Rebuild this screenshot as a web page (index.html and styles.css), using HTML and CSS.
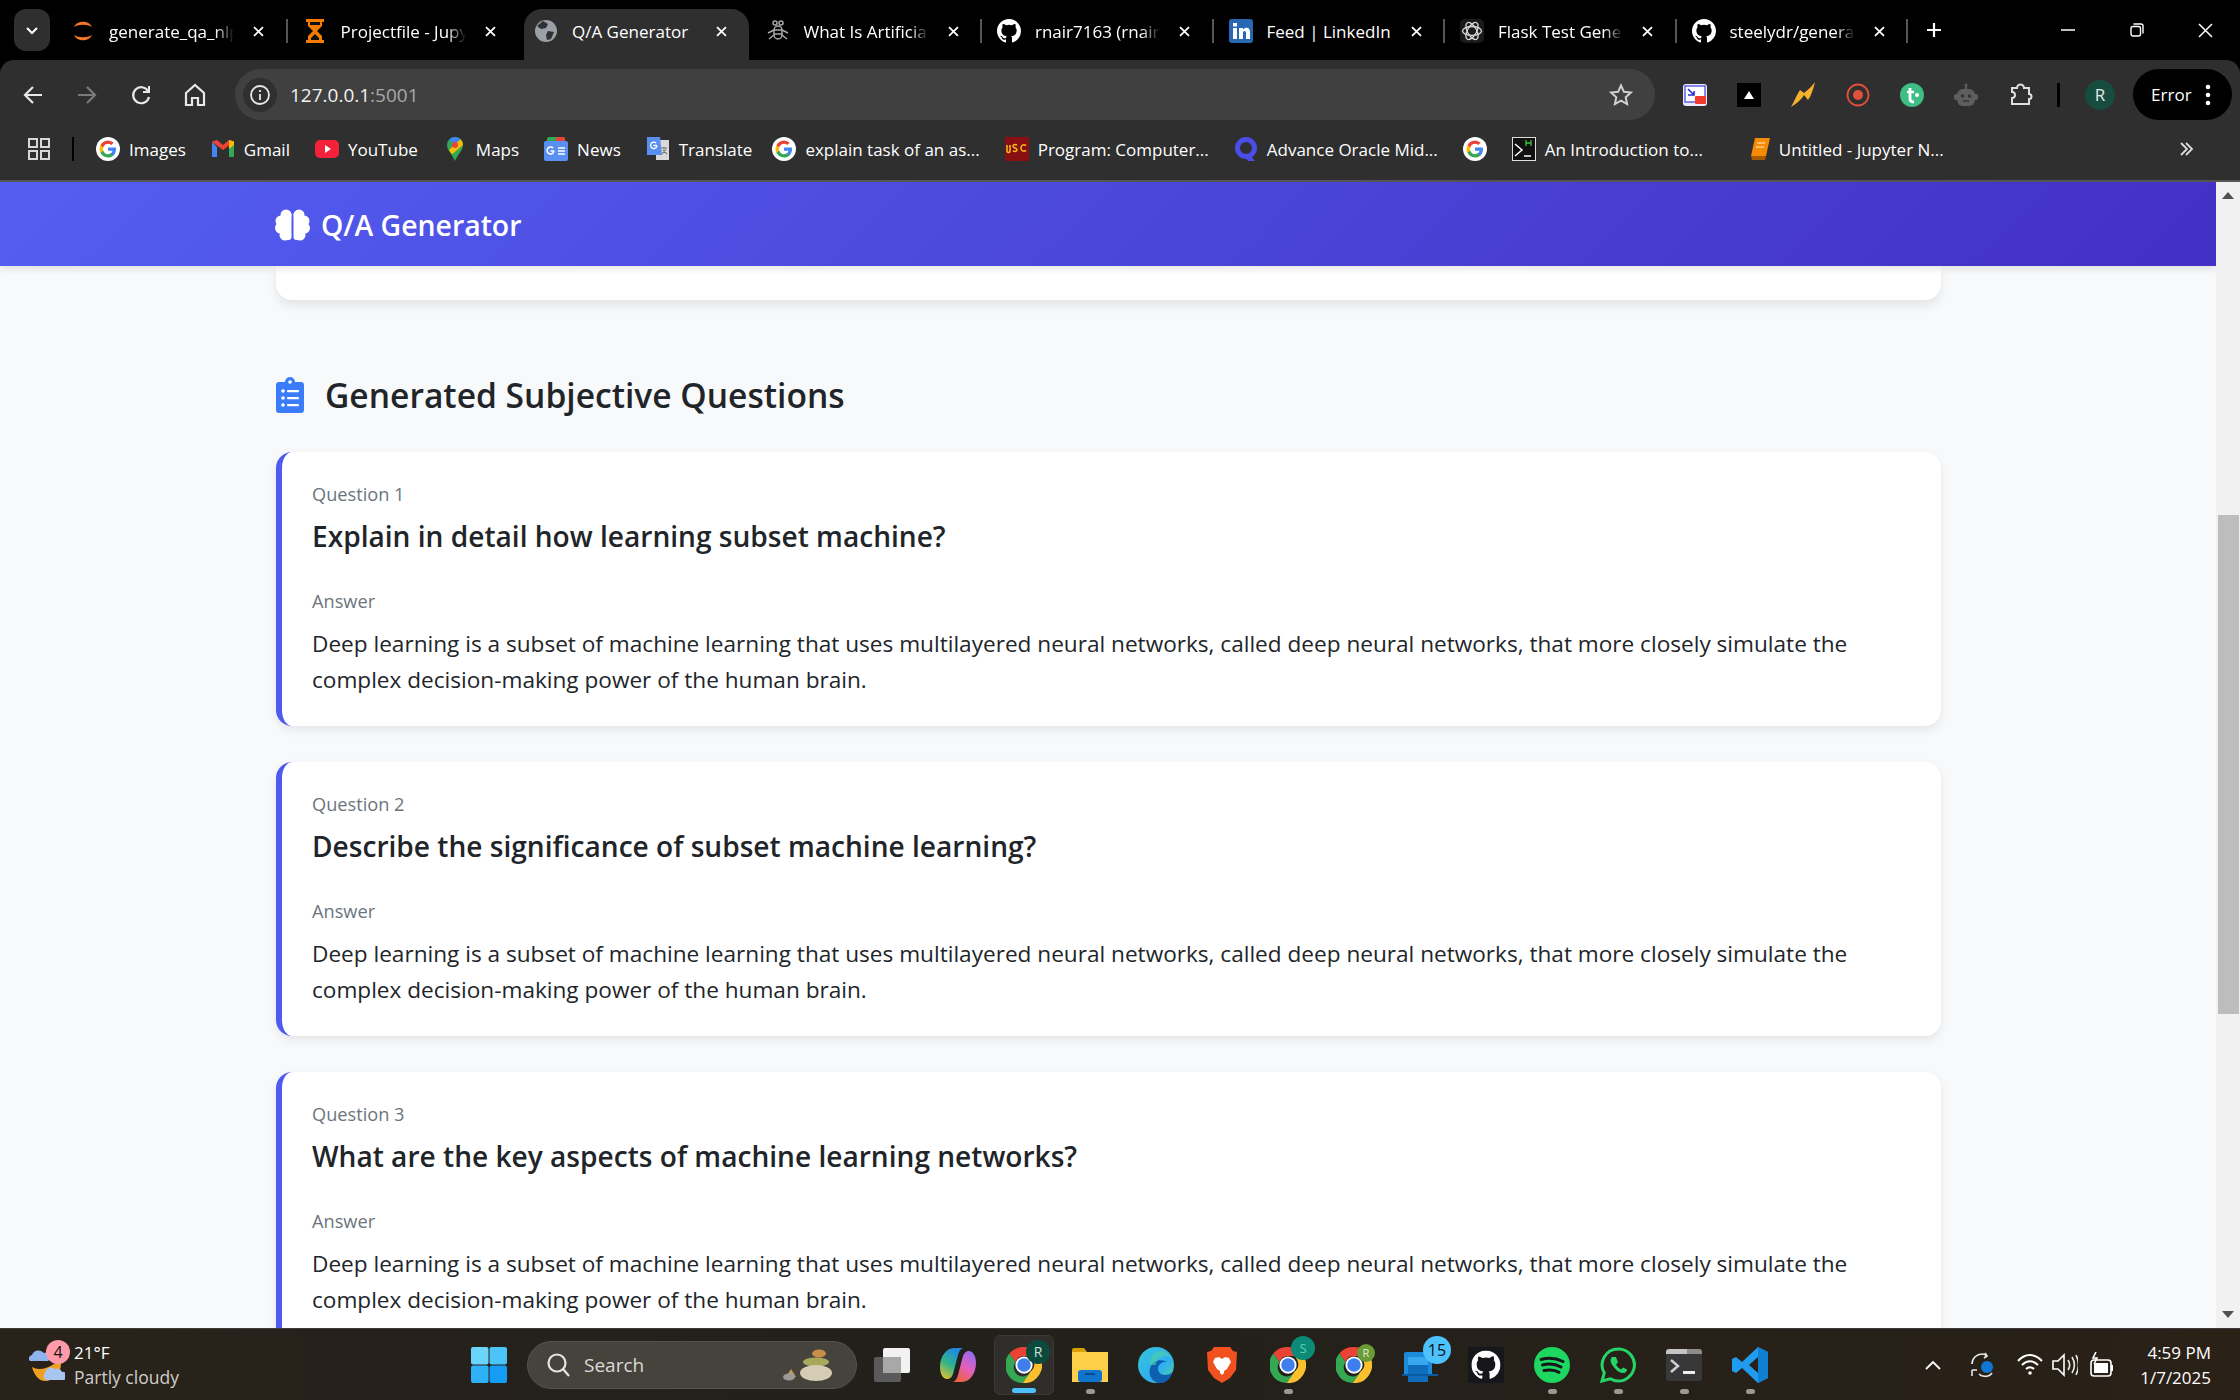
FILE: index.html
```html
<!DOCTYPE html>
<html lang="en">
<head>
    <meta charset="UTF-8">
    <meta name="viewport" content="width=device-width, initial-scale=1.0">
    <title>Q/A Generator</title>
    <link rel="stylesheet" href="styles.css">
</head>
<body>
    <svg class="defs" width="0" height="0">
        <symbol id="close" viewBox="0 0 16 16"><path d="M2.500 2.500l11 11M13.500 2.500l-11 11" stroke="#fff" stroke-width="2.200" fill="none"/></symbol>
        <symbol id="gicon" viewBox="0 0 48 48">
            <circle cx="24" cy="24" r="24" fill="#fff"/>
            <path d="M40 24.500c0-1.200-.1-2.300-.3-3.400H24v6.500h9a7.700 7.700 0 0 1-3.300 5v4.200h5.400c3.100-2.900 4.900-7.100 4.900-12.300z" fill="#4285f4"/>
            <path d="M24 41c4.500 0 8.300-1.500 11.100-4.100l-5.400-4.200c-1.500 1-3.400 1.600-5.700 1.600-4.400 0-8.100-3-9.400-6.900H9v4.300A17 17 0 0 0 24 41z" fill="#34a853"/>
            <path d="M14.600 27.400a10 10 0 0 1 0-6.800v-4.300H9a17 17 0 0 0 0 15.400z" fill="#fbbc05"/>
            <path d="M24 13.700c2.500 0 4.700.9 6.500 2.500l4.800-4.800A17 17 0 0 0 9 16.300l5.600 4.300c1.300-3.900 5-6.900 9.400-6.900z" fill="#ea4335"/>
        </symbol>
        <symbol id="github" viewBox="0 0 16 16"><path fill="#fff" d="M8 0C3.580 0 0 3.580 0 8c0 3.540 2.290 6.530 5.470 7.590.4.070.55-.17.55-.38 0-.19-.01-.82-.01-1.490-2.010.37-2.530-.49-2.690-.94-.09-.23-.48-.94-.82-1.130-.28-.15-.68-.52-.01-.53.630-.01 1.080.58 1.230.82.720 1.210 1.870.87 2.330.66.070-.52.280-.87.510-1.070-1.780-.2-3.640-.89-3.640-3.950 0-.87.310-1.590.820-2.150-.08-.2-.36-1.020.08-2.120 0 0 .67-.21 2.200.82a7.500 7.500 0 0 1 4 0c1.530-1.040 2.200-.82 2.200-.82.440 1.100.16 1.920.08 2.120.51.560.82 1.270.82 2.150 0 3.070-1.870 3.750-3.650 3.950.29.250.54.730.54 1.480 0 1.070-.01 1.930-.01 2.200 0 .21.150.46.550.38A8.010 8.010 0 0 0 16 8c0-4.420-3.580-8-8-8z"/></symbol>
        <symbol id="chrome" viewBox="0 0 48 48">
            <path d="M24 0a24 24 0 0 1 20.800 12H24a12 12 0 0 0-11.300 8L4.400 8.800A24 24 0 0 1 24 0z" fill="#ea4335"/>
            <path d="M44.800 12A24 24 0 0 1 22 48l10.800-15.500A12 12 0 0 0 34 14z" fill="#fbc02d"/>
            <path d="M4.400 8.800A24 24 0 0 0 22 48l10-13.500A12 12 0 0 1 12.700 20z" fill="#34a853"/>
            <circle cx="24" cy="24" r="11.500" fill="#fff"/>
            <circle cx="24" cy="24" r="9" fill="#3f7fed"/>
        </symbol>
    </svg>

    <div class="tabstrip">
        <div class="tab-search"><svg width="14" height="9" viewBox="0 0 14 9"><path d="M2 2l5 5 5-5" stroke="#fff" stroke-width="2" fill="none"/></svg></div>
        <div class="tabs">
            <div class="tab">
                <svg class="favicon" viewBox="0 0 24 24"><path d="M3 8c3-7 15-7 18 0-5-3-13-3-18 0zM3 16c3 7 15 7 18 0-5 3-13 3-18 0z" fill="#f37726"/></svg>
                <span class="tab-title">generate_qa_nlp</span>
                <svg class="tab-close"><use href="#close"/></svg>
            </div>
            <div class="tab no-sep">
                <svg class="favicon" viewBox="0 0 24 24"><path d="M3 0h18v3h-2v4l-5 5 5 5v4h2v3H3v-3h2v-4l5-5-5-5V3H3z" fill="#f57c00"/><path d="M7 3h10v3H7zM12 15l-4 4v2h8v-2z" fill="#111"/></svg>
                <span class="tab-title">Projectfile - Jupy</span>
                <svg class="tab-close"><use href="#close"/></svg>
            </div>
            <div class="tab active">
                <svg class="favicon" viewBox="0 0 24 24"><circle cx="12" cy="12" r="11" fill="#9aa0a6"/><path d="M9 2l5 3-2 4-5 1-4-3zM14 12l6 1-3 7-4 1-1-5z" fill="#303134"/></svg>
                <span class="tab-title full">Q/A Generator</span>
                <svg class="tab-close"><use href="#close"/></svg>
            </div>
            <div class="tab">
                <svg class="favicon" viewBox="0 0 24 24" fill="none" stroke="#a8a8a8" stroke-width="1.500"><circle cx="9" cy="4" r="2"/><circle cx="15" cy="4" r="2"/><rect x="8" y="7" width="8" height="13" rx="4"/><path d="M8 11h8M8 15h8M8 11l-6 3M16 11l6 3M8 16l-5 4M16 16l5 4"/></svg>
                <span class="tab-title">What Is Artificia</span>
                <svg class="tab-close"><use href="#close"/></svg>
            </div>
            <div class="tab">
                <svg class="favicon"><use href="#github"/></svg>
                <span class="tab-title">rnair7163 (rnair</span>
                <svg class="tab-close"><use href="#close"/></svg>
            </div>
            <div class="tab">
                <svg class="favicon" viewBox="0 0 24 24"><rect width="24" height="24" rx="3" fill="#2867b2"/><path d="M4 9h4v11H4zM4 4h4v3.500H4zM10 9h4v1.500c1-1.200 2.200-1.800 3.500-1.800 2.500 0 3.500 1.800 3.500 4.500V20h-4v-6c0-1.300-.5-2-1.500-2s-1.500.7-1.500 2v6h-4z" fill="#fff"/></svg>
                <span class="tab-title full">Feed | LinkedIn</span>
                <svg class="tab-close"><use href="#close"/></svg>
            </div>
            <div class="tab">
                <svg class="favicon" viewBox="0 0 24 24" fill="none" stroke="#d8d8d8" stroke-width="1.300"><rect width="24" height="24" rx="5" fill="#1a1a1a" stroke="none"/><ellipse cx="12" cy="12" rx="9.500" ry="4.500"/><ellipse cx="12" cy="12" rx="9.500" ry="4.500" transform="rotate(60 12 12)"/><ellipse cx="12" cy="12" rx="9.500" ry="4.500" transform="rotate(120 12 12)"/></svg>
                <span class="tab-title">Flask Test Gener</span>
                <svg class="tab-close"><use href="#close"/></svg>
            </div>
            <div class="tab">
                <svg class="favicon"><use href="#github"/></svg>
                <span class="tab-title">steelydr/genera</span>
                <svg class="tab-close"><use href="#close"/></svg>
            </div>
        </div>
        <svg class="new-tab" width="18" height="18" viewBox="0 0 18 18"><path d="M9 2v14M2 9h14" stroke="#fff" stroke-width="2.200"/></svg>
        <div class="win-controls">
            <div class="win-btn"><svg width="14" height="14" viewBox="0 0 14 14"><path d="M0 7h14" stroke="#fff" stroke-width="1.500"/></svg></div>
            <div class="win-btn"><svg width="14" height="14" viewBox="0 0 14 14" fill="none" stroke="#fff" stroke-width="1.400"><rect x="1" y="3.500" width="9.500" height="9.500" rx="2"/><path d="M3.500 1H11a2 2 0 0 1 2 2v7.500"/></svg></div>
            <div class="win-btn"><svg width="15" height="15" viewBox="0 0 15 15"><path d="M1 1l13 13M14 1L1 14" stroke="#fff" stroke-width="1.500"/></svg></div>
        </div>
    </div>

    <div class="toolbar">
        <div class="nav-btn"><svg width="22" height="22" viewBox="0 0 22 22" fill="none" stroke="#e8e8e8" stroke-width="2.200"><path d="M20 11H3M11 3l-8 8 8 8"/></svg></div>
        <div class="nav-btn"><svg width="22" height="22" viewBox="0 0 22 22" fill="none" stroke="#7a7a7a" stroke-width="2.200"><path d="M2 11h17M11 3l8 8-8 8"/></svg></div>
        <div class="nav-btn"><svg width="22" height="22" viewBox="0 0 22 22" fill="none" stroke="#e8e8e8" stroke-width="2.200"><path d="M18 7a8 8 0 1 0 1 6"/><path d="M19 2v6h-6" stroke-width="2"/></svg></div>
        <div class="nav-btn"><svg width="22" height="24" viewBox="0 0 22 24" fill="none" stroke="#e8e8e8" stroke-width="2.200"><path d="M2 10l9-8 9 8v12h-6v-7H8v7H2z"/></svg></div>
        <div class="omnibox">
            <div class="site-info"><svg width="22" height="22" viewBox="0 0 22 22" fill="none" stroke="#e8e8e8" stroke-width="1.800"><circle cx="11" cy="11" r="9"/><path d="M11 10v6M11 6v2"/></svg></div>
            <span class="url">127.0.0.1<span class="url-port">:5001</span></span>
            <svg class="star" width="24" height="24" viewBox="0 0 24 24"><path d="M12 2.500l2.900 6.300 6.900.8-5.100 4.700 1.400 6.800-6.100-3.400-6.100 3.400 1.400-6.800-5.100-4.700 6.900-.8z" fill="none" stroke="#d0d0d0" stroke-width="2"/></svg>
        </div>
        <div class="extensions">
            <div class="ext"><svg width="24" height="22" viewBox="0 0 24 22"><rect width="24" height="22" rx="3" fill="#e8ecfb"/><rect x="2" y="2" width="20" height="16" fill="#fff" stroke="#3a3fd8" stroke-width="1.200"/><path d="M5 5l6 6M5 11h6V7" stroke="#2b30d0" stroke-width="1.600" fill="none"/><rect x="12" y="12" width="11" height="8" rx="1" fill="#ef3a2d"/></svg></div>
            <div class="ext"><svg width="24" height="24" viewBox="0 0 24 24"><rect width="24" height="24" fill="#000"/><path d="M12 8l5 8H7z" fill="#fff"/></svg></div>
            <div class="ext"><svg width="24" height="25" viewBox="0 0 24 25"><path d="M24 0C22 8 20 14 17 18L13 13C11 17 5 22 0 25 3 20 6 12 9 8L13 11C17 8 21 4 24 0z" fill="#f5b02e"/></svg></div>
            <div class="ext"><svg width="24" height="24" viewBox="0 0 24 24"><circle cx="12" cy="12" r="10.500" fill="none" stroke="#e0503c" stroke-width="1.800"/><circle cx="12" cy="12" r="5" fill="#e0503c"/></svg></div>
            <div class="ext"><svg width="24" height="24" viewBox="0 0 24 24"><circle cx="12" cy="12" r="12" fill="#3ebd85"/><path d="M10 5v11c0 2 1 3 4 3" fill="none" stroke="#fff" stroke-width="2.800"/><path d="M7 9h7" stroke="#fff" stroke-width="2.400"/><circle cx="17" cy="12" r="2" fill="#fff"/></svg></div>
            <div class="ext"><svg width="24" height="24" viewBox="0 0 24 24"><circle cx="12" cy="2" r="1.500" fill="#5e5e5e"/><rect x="11" y="2" width="2" height="4" fill="#5e5e5e"/><rect x="3" y="6" width="18" height="17" rx="6" fill="#5e5e5e"/><rect x="0" y="11" width="24" height="6" rx="2" fill="#5e5e5e"/><circle cx="8.500" cy="13" r="1.800" fill="#333"/><circle cx="15.500" cy="13" r="1.800" fill="#333"/><path d="M9 18h6" stroke="#333" stroke-width="1.500"/></svg></div>
            <div class="ext"><svg width="24" height="24" viewBox="0 0 24 24"><path d="M3 6h5a3.500 3.500 0 0 1 7 0h5v6a2.500 2.500 0 0 1 0 5v5H3v-6a3 3 0 0 0 0-6z" fill="none" stroke="#dedede" stroke-width="2" transform="translate(0 -1)"/></svg></div>
        </div>
        <div class="toolbar-sep"></div>
        <div class="avatar">R</div>
        <div class="error-pill">
            <span>Error</span>
            <svg width="6" height="22" viewBox="0 0 6 22"><circle cx="3" cy="3" r="2.300" fill="#fff"/><circle cx="3" cy="11" r="2.300" fill="#fff"/><circle cx="3" cy="19" r="2.300" fill="#fff"/></svg>
        </div>
    </div>

    <div class="bookmarks">
        <svg class="apps" width="22" height="22" viewBox="0 0 22 22" fill="none" stroke="#d8d8d8" stroke-width="2"><rect x="1" y="1" width="8" height="8"/><rect x="13" y="1" width="8" height="8"/><rect x="1" y="13" width="8" height="8"/><rect x="13" y="13" width="8" height="8"/></svg>
        <div class="bm-sep"></div>
        <div class="bm"><svg class="bm-icon"><use href="#gicon"/></svg>Images</div>
        <div class="bm"><svg class="bm-icon" viewBox="0 0 24 24"><path d="M1 5v15h5V10z" fill="#4285f4"/><path d="M23 5v15h-5V10z" fill="#34a853"/><path d="M1 5l11 8 11-8v-.500L18 3l-6 5-6-5-5 1.500z" fill="#ea4335"/><path d="M18 3l5 1.500V8l-5 4z" fill="#fbbc05"/></svg>Gmail</div>
        <div class="bm"><svg class="bm-icon" viewBox="0 0 24 24"><rect y="3" width="24" height="18" rx="5" fill="#f4213a"/><path d="M10 8l6 4-6 4z" fill="#fff"/></svg>YouTube</div>
        <div class="bm"><svg class="bm-icon" viewBox="0 0 24 24"><path d="M12 0a8 8 0 0 0-8 8c0 5 5 9 8 16 3-7 8-11 8-16a8 8 0 0 0-8-8z" fill="#34a853"/><path d="M12 0a8 8 0 0 0-6 2.700l6 5.300 5.500-5.800A8 8 0 0 0 12 0z" fill="#4285f4"/><path d="M17.500 2.200L6 13c1 1.500 2 2.800 3 4.200L20 8a8 8 0 0 0-2.500-5.800z" fill="#fbbc05"/><circle cx="12" cy="8" r="3" fill="#ea4335"/></svg>Maps</div>
        <div class="bm"><svg class="bm-icon" viewBox="0 0 24 24"><rect x="3" y="0" width="18" height="10" rx="2" fill="#34a853"/><rect x="12" y="0" width="9" height="10" rx="2" fill="#ea4335"/><rect x="0" y="4" width="24" height="20" rx="2" fill="#5a8ff2"/><path d="M14 11h7M14 14h7M14 17h7M10 14a3.500 3.500 0 1 1-1-3" stroke="#fff" stroke-width="1.500" fill="none"/><path d="M6.500 14H10" stroke="#fff" stroke-width="1.500"/></svg>News</div>
        <div class="bm bm-tight"><svg class="bm-icon" viewBox="0 0 24 24"><path d="M10 3h13v20H10z" fill="#d9d9d9"/><path d="M1 0h13l2 18H1z" fill="#5a8ff2"/><path d="M11 8.500a3.200 3.200 0 1 1-1-2.500M7.500 8.500H11" stroke="#fff" stroke-width="1.300" fill="none"/><path d="M15 11h6M18 10v2M16 17l4-5M17 13l4 4" stroke="#777" stroke-width="1.100" fill="none"/></svg>Translate</div>
        <div class="bm"><svg class="bm-icon"><use href="#gicon"/></svg>explain task of an as...</div>
        <div class="bm"><svg class="bm-icon" viewBox="0 0 24 24"><rect y="0" width="24" height="24" fill="#8a0f12"/><path d="M2 8v6c0 2 3 2 3 0V8M12 8c-2-1-4-.500-4 1.300 0 2 4 1.500 4 3.500 0 1.700-2.500 2-4 1M21 8.500c-2.500-1.500-5-.500-5 2.500s2.500 4 5 2.500" stroke="#f0c21b" stroke-width="1.500" fill="none"/></svg>Program: Computer...</div>
        <div class="bm"><svg class="bm-icon" viewBox="0 0 24 24"><circle cx="12" cy="11" r="8.500" fill="none" stroke="#4c4de8" stroke-width="5"/><path d="M16 18l5 6h-7l-3-4z" fill="#4c4de8"/></svg>Advance Oracle Mid...</div>
        <div class="bm"><svg class="bm-icon"><use href="#gicon"/></svg></div>
        <div class="bm"><svg class="bm-icon" viewBox="0 0 24 24"><rect x=".5" y=".5" width="23" height="23" fill="#111" stroke="#ddd"/><path d="M3 7l7 6-7 6" stroke="#fff" stroke-width="1.500" fill="none"/><path d="M12 19h7" stroke="#fff" stroke-width="1.500"/><path d="M14 3v6M19 3v6M14 6h5" stroke="#3fc23a" stroke-width="1.300"/></svg>An Introduction to...</div>
        <div class="bm bm-last"><svg width="20" height="22" viewBox="0 0 20 22"><path d="M5 0h15l-4 18H1z" fill="#f58a07"/><path d="M1 18h15l-1 4H2z" fill="#a85a00"/><path d="M7 5h8M6 9h8" stroke="#ffd08a" stroke-width="1.500"/></svg>Untitled - Jupyter N...</div>
        <svg class="bm-more" width="16" height="16" viewBox="0 0 16 16" fill="none" stroke="#dcdcdc" stroke-width="1.800"><path d="M3 2l6 6-6 6M8 2l6 6-6 6"/></svg>
    </div>

    <div class="viewport">
        <div class="page">
            <header class="appbar">
                <svg class="brain" width="35" height="32" viewBox="0 0 35 32">
                    <g fill="#fff"><circle cx="11" cy="6" r="5.500"/><circle cx="6" cy="12" r="5.500"/><circle cx="5.500" cy="19" r="5.500"/><circle cx="10" cy="26" r="5.500"/><rect x="9" y="3" width="7.500" height="28" rx="3"/><circle cx="24" cy="6" r="5.500"/><circle cx="29" cy="12" r="5.500"/><circle cx="29.500" cy="19" r="5.500"/><circle cx="25" cy="26" r="5.500"/><rect x="18.500" y="3" width="7.500" height="28" rx="3"/></g>
                </svg>
                <span class="brand">Q/A Generator</span>
            </header>
            <main class="content">
                <div class="form-stub"></div>
                <h2 class="section-title">
                    <svg width="28" height="36" viewBox="0 0 28 36"><path d="M3 5h6a5 5 0 0 1 10 0h6a3 3 0 0 1 3 3v25a3 3 0 0 1-3 3H3a3 3 0 0 1-3-3V8a3 3 0 0 1 3-3z" fill="#3b7cfb"/><circle cx="14" cy="5" r="1.800" fill="#fff"/><g fill="#fff"><circle cx="7" cy="14" r="1.800"/><circle cx="7" cy="21" r="1.800"/><circle cx="7" cy="28" r="1.800"/><rect x="11" y="13" width="12" height="2.200" rx="1"/><rect x="11" y="20" width="12" height="2.200" rx="1"/><rect x="11" y="27" width="12" height="2.200" rx="1"/></g></svg>
                    Generated Subjective Questions
                </h2>
                <article class="qa-card">
                    <div class="qa-label">Question 1</div>
                    <h3 class="qa-question">Explain in detail how learning subset machine?</h3>
                    <div class="qa-label qa-answer-label">Answer</div>
                    <p class="qa-answer">Deep learning is a subset of machine learning that uses multilayered neural networks, called deep neural networks, that more closely simulate the complex decision-making power of the human brain.</p>
                </article>
                <article class="qa-card">
                    <div class="qa-label">Question 2</div>
                    <h3 class="qa-question">Describe the significance of subset machine learning?</h3>
                    <div class="qa-label qa-answer-label">Answer</div>
                    <p class="qa-answer">Deep learning is a subset of machine learning that uses multilayered neural networks, called deep neural networks, that more closely simulate the complex decision-making power of the human brain.</p>
                </article>
                <article class="qa-card">
                    <div class="qa-label">Question 3</div>
                    <h3 class="qa-question">What are the key aspects of machine learning networks?</h3>
                    <div class="qa-label qa-answer-label">Answer</div>
                    <p class="qa-answer">Deep learning is a subset of machine learning that uses multilayered neural networks, called deep neural networks, that more closely simulate the complex decision-making power of the human brain.</p>
                </article>
            </main>
        </div>
        <div class="scrollbar">
            <svg class="sb-arrow" width="12" height="7" viewBox="0 0 12 7"><path d="M6 0l6 7H0z" fill="#505050"/></svg>
            <div class="sb-track"><div class="sb-thumb"></div></div>
            <svg class="sb-arrow" width="12" height="7" viewBox="0 0 12 7"><path d="M0 0h12L6 7z" fill="#505050"/></svg>
        </div>
    </div>

    <footer class="taskbar">
        <div class="weather">
            <div class="weather-icon">
                <svg width="36" height="33" viewBox="0 0 36 33"><path d="M3 19c5 3 13 3 22-3 4-2 6-2 7 0 0 9-7 17-16 17-6 0-11-6-13-14z" fill="#f0a020"/><path d="M1 13a3.500 3.500 0 0 1 2-6 7 7 0 0 1 12-2 4.500 4.500 0 0 1 4 8z" fill="#8eb4ee"/><path d="M17 32a4 4 0 0 1-1-7 6 6 0 0 1 10-4 5 5 0 0 1 7 3 4 4 0 0 1 2 8z" fill="#a9c6f2"/></svg>
                <span class="weather-badge">4</span>
            </div>
            <div class="weather-text">
                <div class="temp">21°F</div>
                <div class="sky">Partly cloudy</div>
            </div>
        </div>
        <div class="task-tile start"><svg width="36" height="36" viewBox="0 0 36 36"><rect width="17.500" height="17.500" rx="2" fill="#6ad4fb"/><rect x="18.500" width="17.500" height="17.500" rx="2" fill="#4cc4f8"/><rect y="18.500" width="17.500" height="17.500" rx="2" fill="#2fb1f7"/><rect x="18.500" y="18.500" width="17.500" height="17.500" rx="2" fill="#159cf5"/></svg></div>
        <div class="searchbox">
            <svg width="24" height="26" viewBox="0 0 24 26" fill="none" stroke="#e5e5e5" stroke-width="2.200"><circle cx="11" cy="11" r="8.500"/><path d="M17 17l6 7"/></svg>
            <span class="search-label">Search</span>
            <svg class="stones" width="49" height="32" viewBox="0 0 49 32"><ellipse cx="36" cy="4.500" rx="7" ry="4" fill="#c98d4a"/><ellipse cx="33" cy="13" rx="13" ry="4.500" fill="#a9a85a"/><ellipse cx="33" cy="24" rx="16" ry="8" fill="#d5ccb5"/><path d="M8 20l5 8H3z" fill="#c59a60"/><ellipse cx="6" cy="28" rx="6" ry="3.500" fill="#9a9a9a"/></svg>
        </div>
        <div class="task-tile"><svg width="36" height="34" viewBox="0 0 36 34"><rect y="9" width="27" height="25" rx="2" fill="#5a5a5a"/><rect x="9" width="27" height="25" rx="2" fill="#f2f2f2"/><rect x="9" y="9" width="18" height="16" fill="#a8a8a8"/></svg></div>
        <div class="task-tile"><svg width="36" height="34" viewBox="0 0 36 34"><defs><linearGradient id="cop1" x1=".6" y1="0" x2=".1" y2="1"><stop offset="0" stop-color="#1e88e5"/><stop offset=".5" stop-color="#2fb58a"/><stop offset="1" stop-color="#f2c22a"/></linearGradient><linearGradient id="cop2" x1=".8" y1="0" x2=".3" y2="1"><stop offset="0" stop-color="#8f6cf0"/><stop offset=".5" stop-color="#e25fc0"/><stop offset="1" stop-color="#f0633a"/></linearGradient></defs><path d="M14 0H23C20 1 19 4 18 7L13 26C12 29 10 31 7 31 3 31 0 26 0 19 0 9 6 0 14 0z" fill="url(#cop1)"/><path d="M22 34H13C16 33 17 30 18 27L23 8C24 5 26 3 29 3 33 3 36 8 36 15 36 25 30 34 22 34z" fill="url(#cop2)"/></svg></div>
        <div class="task-tile current">
            <svg width="36" height="36"><use href="#chrome"/></svg>
            <span class="tile-badge badge-r">R</span>
        </div>
        <div class="task-tile running"><svg width="36" height="34" viewBox="0 0 36 34"><path d="M0 2a2 2 0 0 1 2-2h10l3 4h19a2 2 0 0 1 2 2v4H0z" fill="#d8a000"/><rect y="4" width="36" height="30" fill="#fdcf4a"/><rect x="6" y="22" width="24" height="12" rx="3" fill="#1074cc"/><path d="M13 26h10" stroke="#0a3d7a" stroke-width="1.500"/></svg></div>
        <div class="task-tile"><svg width="36" height="36" viewBox="0 0 36 36"><defs><linearGradient id="edge1" x1="0" y1="0" x2="1" y2="1"><stop offset="0" stop-color="#37c5d8"/><stop offset=".6" stop-color="#2faef0"/><stop offset="1" stop-color="#54d98a"/></linearGradient></defs><circle cx="18" cy="18" r="18" fill="url(#edge1)"/><path d="M36 20c0 5-4 8-9 8-4 0-7-3-7-6 0-5 5-8 9-7-4-3-14-3-17 6-2 7 2 14 9 15 7 1 13-5 15-16z" fill="#0f5fb0"/><path d="M36 18c0-2-1-4-2-6-3-4-8-4-11-2-4 2-5 5-5 8h-6C12 9 18 3 24 4c6 1 11 7 12 14z" fill="#4fd3a0" opacity=".6"/></svg></div>
        <div class="task-tile"><svg width="30" height="36" viewBox="0 0 30 36"><path d="M7 0h16l3 4 4 1-1 18-6 8-8 5-8-5-6-8L0 5l4-1z" fill="#f1511e"/><path d="M8 11l4-1 3 2 3-2 4 1 2 4-4 7-3 2v2l-2 2-2-2v-2l-3-2-4-7z" fill="#fff"/></svg></div>
        <div class="task-tile running">
            <svg width="36" height="36"><use href="#chrome"/></svg>
            <span class="tile-badge badge-s">S</span>
        </div>
        <div class="task-tile">
            <svg width="36" height="36"><use href="#chrome"/></svg>
            <span class="tile-badge badge-g">R</span>
        </div>
        <div class="task-tile">
            <svg width="36" height="34" viewBox="0 0 36 34"><rect x="2" y="4" width="28" height="24" rx="2" fill="#1c8ad8"/><rect x="6" y="9" width="20" height="25" fill="#0f6cbd"/><rect x="6" y="9" width="20" height="8" fill="#35a8ee"/><rect x="0" y="26" width="36" height="2" fill="#0a5aa0"/></svg>
            <span class="tile-badge badge-mail">15</span>
        </div>
        <div class="task-tile"><svg width="36" height="36" viewBox="0 0 16 16"><rect width="16" height="16" fill="#16171b"/><g transform="translate(1.500 1.500) scale(.81)"><use href="#github" width="16" height="16"/></g></svg></div>
        <div class="task-tile running"><svg width="36" height="36" viewBox="0 0 36 36"><circle cx="18" cy="18" r="18" fill="#1ed760"/><path d="M7 12.500c7-2 15-1.500 22 2M8.500 18c6-1.500 13-1 18.500 2M10 23.500c5-1 11-.700 15 1.800" fill="none" stroke="#16171b" stroke-width="3" stroke-linecap="round"/></svg></div>
        <div class="task-tile running"><svg width="36" height="36" viewBox="0 0 36 36"><path d="M18 2a16 16 0 0 0-13.700 24L2 34l8.300-2.200A16 16 0 1 0 18 2z" fill="none" stroke="#25d366" stroke-width="3"/><path d="M12 10c-2 2-2 5 1 9s6 7 10 7c3 0 4-2 4-3.500l-4-2-2 2c-2-1-4-3-5-5l2-2-2-5.500z" fill="#25d366"/></svg></div>
        <div class="task-tile running"><svg width="36" height="32" viewBox="0 0 36 32"><rect width="36" height="32" rx="3" fill="#383838"/><path d="M0 3a3 3 0 0 1 3-3h18v5H0z" fill="#c4c4c4"/><path d="M21 0h12a3 3 0 0 1 3 3v2H21z" fill="#8c8c8c"/><path d="M5 11l7 6-7 6" fill="none" stroke="#cfcfcf" stroke-width="2.500"/><rect x="17" y="22" width="12" height="3" fill="#f0f0f0"/></svg></div>
        <div class="task-tile running"><svg width="36" height="36" viewBox="0 0 36 36"><path d="M26 0l10 5v26l-10 5L10 21l-6 5-4-2V12l4-2 6 5zM26 10l-9 8 9 8z" fill="#1f9cf0"/><path d="M26 0l10 5v26l-10 5z" fill="#0f7fd0"/></svg></div>
        <div class="tray">
            <svg class="tray-chevron" width="16" height="10" viewBox="0 0 16 10" fill="none" stroke="#fff" stroke-width="1.800"><path d="M1 9l7-7 7 7"/></svg>
            <svg class="tray-sync" width="24" height="26" viewBox="0 0 24 26" fill="none" stroke="#e8e8e8" stroke-width="1.600"><path d="M2 12C2 6 7 2 12 2c2 0 4 1 5 2M22 21c-2 3-6 4-9 3-1 0-3-1-4-2"/><path d="M15 1l2 3-3 2M2 18v6M2 18h5"/><circle cx="17" cy="15" r="6" fill="#0f78d4" stroke="none"/></svg>
            <svg class="tray-wifi" width="26" height="24" viewBox="0 0 26 24" fill="none" stroke="#fff" stroke-width="2"><path d="M1 8c7-8 17-8 24 0M5 12c5-5 11-5 16 0M9 16c2.500-2.500 5.500-2.500 8 0"/><circle cx="13" cy="20" r="1.800" fill="#fff" stroke="none"/></svg>
            <svg class="tray-sound" width="26" height="24" viewBox="0 0 26 24" fill="none" stroke="#fff" stroke-width="1.600"><path d="M1 8h5l6-6v20l-6-6H1z"/><path d="M16 7c2 3 2 7 0 10M20 4c3 5 3 11 0 16M24 2c3 6 3 14 0 20" opacity=".9"/></svg>
            <svg class="tray-battery" width="24" height="26" viewBox="0 0 24 26" fill="none" stroke="#fff" stroke-width="1.600"><rect x="1" y="8" width="20" height="16" rx="3"/><rect x="4" y="11" width="14" height="10" fill="#fff" stroke="none"/><path d="M6 0L3 6h4L4 12"/><path d="M22 13v6" stroke-width="2"/></svg>
            <div class="clock">
                <div>4:59 PM</div>
                <div>1/7/2025</div>
            </div>
        </div>
    </footer>
</body>
</html>
```

FILE: styles.css
```css
* {
    box-sizing: border-box;
}
html, body {
    margin: 0;
    height: 100%;
    overflow: hidden;
}
body {
    font-family: "Open Sans", "Noto Sans", sans-serif;
    display: flex;
    flex-direction: column;
    height: 100vh;
    background-color: #000;
    color: #fff;
}
.defs {
    position: absolute;
}

/* tab strip */
.tabstrip {
    display: flex;
    align-items: flex-start;
    height: 60px;
    flex-shrink: 0;
    background-color: #000;
    padding-left: 14px;
}
.tab-search {
    width: 36px;
    height: 42px;
    margin-top: 9px;
    margin-right: 6px;
    border-radius: 12px;
    background-color: #2f2f2f;
    display: flex;
    align-items: center;
    justify-content: center;
}
.tabs {
    display: flex;
}
.tab {
    position: relative;
    width: 231.5px;
    height: 60px;
    padding: 2px 0 0 15px;
    display: flex;
    align-items: center;
    font-size: 17px;
}
.tab::after {
    content: "";
    position: absolute;
    right: 0;
    top: 19px;
    width: 2px;
    height: 24px;
    background-color: #555;
}
.tab.no-sep::after,
.tab.active::after {
    background-color: transparent;
}
.tab.active {
    z-index: 1;
}
.tab.active::before {
    content: "";
    position: absolute;
    left: 5px;
    right: 2px;
    top: 9px;
    bottom: 0;
    background-color: #2f2f2f;
    border-radius: 18px 18px 0 0;
    z-index: -1;
}
.favicon {
    width: 24px;
    height: 24px;
    flex-shrink: 0;
}
.tab-title {
    width: 125px;
    margin-left: 14px;
    white-space: nowrap;
    -webkit-mask-image: linear-gradient(to right, #000 85%, transparent);
    mask-image: linear-gradient(to right, #000 85%, transparent);
}
.tab-title.full {
    -webkit-mask-image: none;
    mask-image: none;
}
.tab-close {
    width: 13px;
    height: 13px;
    margin-left: 18px;
    flex-shrink: 0;
}
.new-tab {
    margin: 21px 0 0 17px;
}
.win-controls {
    margin-left: auto;
    height: 60px;
    display: flex;
}
.win-btn {
    width: 69px;
    display: flex;
    align-items: center;
    justify-content: center;
}

/* toolbar */
.toolbar {
    height: 60px;
    flex-shrink: 0;
    background-color: #2f2f2f;
    border-radius: 14px 14px 0 0;
    display: flex;
    align-items: center;
    padding: 9px 8px 0 6px;
}
.nav-btn {
    width: 54px;
    display: flex;
    justify-content: center;
}
.omnibox {
    width: 1421px;
    height: 51px;
    margin-left: 13px;
    border-radius: 26px;
    background-color: #404040;
    display: flex;
    align-items: center;
    padding: 0 22px 0 8px;
}
.site-info {
    width: 34px;
    height: 34px;
    border-radius: 50%;
    background-color: #2f2f2f;
    display: flex;
    align-items: center;
    justify-content: center;
}
.url {
    margin-left: 13px;
    font-size: 19px;
    color: #f1f1f1;
}
.url-port {
    color: #a9a9a9;
}
.star {
    margin-left: auto;
}
.extensions {
    display: flex;
    margin-left: 12px;
}
.ext {
    width: 54.4px;
    display: flex;
    justify-content: center;
    align-items: center;
}
.toolbar-sep {
    width: 3px;
    height: 24px;
    margin-left: 9px;
    background-color: #000;
}
.avatar {
    width: 30px;
    height: 30px;
    margin-left: 25px;
    border-radius: 50%;
    background-color: #174d3f;
    color: #e8e8e8;
    font-size: 17px;
    display: flex;
    align-items: center;
    justify-content: center;
}
.error-pill {
    width: 99px;
    height: 51px;
    margin-left: 18px;
    border-radius: 26px;
    background-color: #000;
    display: flex;
    align-items: center;
    padding-left: 18px;
    gap: 13px;
    font-size: 17px;
}

/* bookmarks */
.bookmarks {
    height: 62px;
    flex-shrink: 0;
    background-color: #2f2f2f;
    border-bottom: 2px solid #555;
    display: flex;
    align-items: center;
    padding: 0 0 2px 28px;
    font-size: 17px;
}
.bm-sep {
    width: 2px;
    height: 24px;
    margin: 0 22px;
    background-color: #000;
}
.bm {
    display: flex;
    align-items: center;
    gap: 9px;
    margin-right: 25px;
    white-space: nowrap;
}
.bm-tight {
    margin-right: 20px;
}
.bm-icon {
    width: 24px;
    height: 24px;
    flex-shrink: 0;
}
.bm-last {
    margin-left: 22px;
}
.bm-more {
    margin-left: auto;
    margin-right: 46px;
}

/* page area */
.viewport {
    flex: 1;
    min-height: 0;
    display: flex;
    background-color: #f8f9fa;
}
.page {
    flex: 1;
    min-width: 0;
    display: flex;
    flex-direction: column;
    overflow: hidden;
}
.appbar {
    height: 84px;
    flex-shrink: 0;
    display: flex;
    align-items: center;
    padding: 2px 0 0 275px;
    gap: 11px;
    background-image: linear-gradient(135deg, #535ef1, #4330c4);
    box-shadow: 0 3px 8px rgba(0, 0, 0, 0.1);
    position: relative;
    z-index: 2;
}
.brand {
    font-size: 28.4px;
    font-weight: 600;
    color: #fff;
}
.content {
    padding: 0 275px 0 276px;
    color: #212529;
}
.form-stub {
    height: 34px;
    background-color: #fff;
    border-radius: 0 0 16px 16px;
    box-shadow: 0 6px 10px rgba(0, 0, 0, 0.08);
}
.section-title {
    display: flex;
    align-items: center;
    gap: 21px;
    margin: 73px 0 35px;
    height: 44px;
    font-size: 33.6px;
    font-weight: 600;
}
.qa-card {
    height: 274px;
    margin-bottom: 36px;
    padding: 28px 36px 0 30px;
    background-color: #fff;
    border-left: 6px solid #4f5bf0;
    border-radius: 16px;
    box-shadow: 0 4px 10px rgba(0, 0, 0, 0.08);
}
.qa-label {
    font-size: 18.2px;
    line-height: 28px;
    color: #6c757d;
}
.qa-question {
    margin: 6px 0 0;
    font-size: 28.1px;
    line-height: 44px;
    font-weight: 600;
}
.qa-answer-label {
    margin-top: 29px;
}
.qa-answer {
    margin: 11px 0 0;
    font-size: 22.6px;
    line-height: 36px;
}
.scrollbar {
    width: 24px;
    flex-shrink: 0;
    background-color: #f1f1f1;
    display: flex;
    flex-direction: column;
    align-items: center;
    padding: 10px 0;
}
.sb-track {
    flex: 1;
    width: 100%;
    padding: 316px 1px 0 2px;
}
.sb-thumb {
    height: 499px;
    background-color: #bdbdbd;
}

/* taskbar */
.taskbar {
    height: 72px;
    flex-shrink: 0;
    display: flex;
    align-items: center;
    background-image: linear-gradient(to right, #28221a, #22201b 45%, #2a2117);
    border-top: 1px solid #3a3a3a;
}
.weather {
    width: 456px;
    padding-left: 29px;
    display: flex;
    align-items: center;
    gap: 9px;
}
.weather-icon {
    position: relative;
    width: 36px;
    height: 33px;
}
.weather-badge {
    position: absolute;
    left: 17px;
    top: -8px;
    width: 24px;
    height: 24px;
    border-radius: 50%;
    background-color: #ff9aa9;
    color: #111;
    font-size: 16px;
    display: flex;
    align-items: center;
    justify-content: center;
}
.temp {
    font-size: 17px;
    line-height: 24px;
}
.sky {
    font-size: 17.5px;
    line-height: 24px;
    color: #cfcdc9;
}
.task-tile {
    position: relative;
    width: 66px;
    height: 60px;
    display: flex;
    align-items: center;
    justify-content: center;
    flex-shrink: 0;
}
.start {
    margin-right: 5px;
}
.searchbox {
    width: 330px;
    height: 48px;
    margin-right: 2px;
    padding: 0 24px 0 18px;
    border-radius: 24px;
    border: 1px solid #55524c;
    background-color: #46433d;
    display: flex;
    align-items: center;
    gap: 14px;
}
.search-label {
    font-size: 19px;
    color: #dcdad6;
}
.stones {
    margin-left: auto;
}
.task-tile.current {
    background-color: #2f2e2b;
    border: 1px solid #3a3936;
    border-radius: 6px;
    width: 60px;
    margin: 0 3px;
}
.task-tile.current::after,
.task-tile.running::after {
    content: "";
    position: absolute;
    left: 50%;
    bottom: 1px;
    width: 9px;
    height: 5px;
    margin-left: -4px;
    border-radius: 3px;
    background-color: #9a9894;
}
.task-tile.current::after {
    width: 24px;
    margin-left: -12px;
    background-color: #4cc2ff;
}
.tile-badge {
    position: absolute;
    border-radius: 50%;
    display: flex;
    align-items: center;
    justify-content: center;
}
.badge-r {
    right: 3px;
    top: 4px;
    width: 24px;
    height: 24px;
    background-color: #0c4a3e;
    font-size: 14px;
    color: #cfe3dc;
}
.badge-s {
    right: 6px;
    top: 1px;
    width: 24px;
    height: 24px;
    background-color: #0b8a77;
    font-size: 13px;
    color: #5fd0b8;
}
.badge-g {
    right: 12px;
    top: 9px;
    width: 18px;
    height: 18px;
    background-color: #6a9b36;
    font-size: 11px;
    color: #dff0c8;
}
.badge-mail {
    right: 2px;
    top: 1px;
    width: 28px;
    height: 28px;
    background-color: #4cc2ff;
    color: #111;
    font-size: 16px;
}
.tray {
    flex: 1;
    display: flex;
    align-items: center;
    justify-content: flex-end;
    padding-right: 29px;
}
.tray-sync {
    margin-left: 29px;
}
.tray-wifi {
    margin-left: 23px;
}
.tray-sound {
    margin-left: 9px;
}
.tray-battery {
    margin-left: 12px;
}
.clock {
    margin-left: 26px;
    text-align: right;
    font-size: 17px;
    line-height: 25px;
}
```
